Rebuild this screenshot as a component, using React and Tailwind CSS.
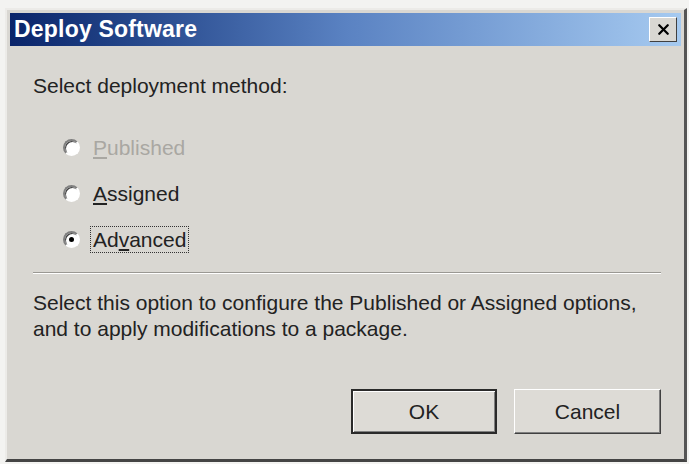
import { X } from 'lucide-react';

const font = { fontFamily: 'Tahoma, "Liberation Sans", Arial, sans-serif' };

const Radio = ({ label, accessKey, checked, disabled, focused }) => {
    const [before, after] = [label.slice(0, label.indexOf(accessKey)), label.slice(label.indexOf(accessKey) + 1)];
    return (
        <div className="flex items-center h-[26px]">
            <span className="relative w-[17px] h-[17px] rounded-full bg-white border-2 border-t-[#808080] border-l-[#808080] border-r-white border-b-white shadow-[inset_1px_1px_0_#404040]">
                {checked && <span className="absolute left-[4px] top-[4px] w-[5px] h-[5px] rounded-full bg-black" />}
            </span>
            <span
                className={`ml-[11px] px-[2px] leading-[25px] ${disabled ? 'text-[#a9a7a2]' : 'text-[#222]'} ${focused ? 'outline outline-1 outline-dotted outline-[#333]' : ''}`}
            >
                {before}<span className="underline underline-offset-2">{accessKey}</span>{after}
            </span>
        </div>
    );
};

export default function App() {
    return (
        <div className="w-[689px] h-[464px] bg-[#f3f3f1] pt-[8px] pl-[5px] pr-[2px] pb-[2px]" style={font}>
            {/* dialog window with raised frame */}
            <div className="w-full h-full flex flex-col bg-[#d9d7d2] border-t-2 border-l-2 border-t-[#ecebe8] border-l-[#ecebe8] border-r-[3px] border-b-[3px] border-r-[#555] border-b-[#444] p-[3px]">
                {/* title bar */}
                <div className="h-[33px] flex items-center justify-between pl-[4px] pr-[4px] bg-gradient-to-r from-[#0a246a] via-[#5a82c2] to-[#a6caf0]">
                    <span className="text-white font-bold text-[23px] tracking-[0.2px]">Deploy Software</span>
                    <button className="w-[28px] h-[25px] flex items-center justify-center bg-[#d9d7d2] border border-t-white border-l-white border-r-[#404040] border-b-[#404040]">
                        <X size={17} strokeWidth={3.2} className="text-black" />
                    </button>
                </div>

                {/* body */}
                <div className="flex-1 flex flex-col pl-[23px] pr-[20px] text-[21px] text-[#222]">
                    <p className="mt-[28px] leading-[24px]">Select deployment method:</p>

                    <div className="mt-[36px] pl-[30px] flex flex-col gap-[20px]">
                        <Radio label="Published" accessKey="P" disabled />
                        <Radio label="Assigned" accessKey="A" />
                        <Radio label="Advanced" accessKey="v" checked focused />
                    </div>

                    <div className="mt-[20px] h-[2px] border-t border-t-[#9a9893] border-b border-b-white" />

                    <p className="mt-[16px] leading-[26px]">
                        Select this option to configure the Published or Assigned options,<br />
                        and to apply modifications to a package.
                    </p>

                    <div className="mt-auto mb-[22px] flex justify-end gap-[17px]">
                        <button className="w-[146px] h-[45px] bg-[#dddbd6] border-2 border-[#2a2a2a] shadow-[inset_1px_1px_0_white,inset_-1px_-1px_0_#808080] text-[#222]">
                            OK
                        </button>
                        <button className="w-[147px] h-[45px] bg-[#dddbd6] border border-t-white border-l-white border-r-[#404040] border-b-[#404040] shadow-[inset_-1px_-1px_0_#808080] text-[#222]">
                            Cancel
                        </button>
                    </div>
                </div>
            </div>
        </div>
    );
}
